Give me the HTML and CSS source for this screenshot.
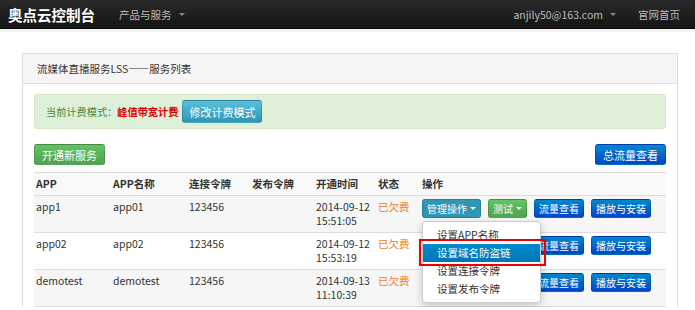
FILE: index.html
```html
<!DOCTYPE html>
<html lang="zh-CN">

<head>
    <meta charset="UTF-8">
    <title>奥点云控制台</title>
    <link rel="stylesheet" href="styles.css">
</head>

<body>
    <div class="navbar">
        <div class="brand">奥点云控制台</div>
        <div class="nav-item">产品与服务 <span class="caret"></span></div>
        <div class="nav-right">
            <div class="nav-item">anjily50@163.com <span class="caret"></span></div>
            <div class="nav-item">官网首页</div>
        </div>
    </div>

    <div class="panel">
        <div class="panel-heading">流媒体直播服务LSS——服务列表</div>
        <div class="panel-body">
            <div class="alert">
                <span>当前计费模式：</span><b class="mode">峰值带宽计费</b>
                <span class="btn btn-info btn-big">修改计费模式</span>
            </div>

            <div class="toolbar">
                <span class="btn btn-success">开通新服务</span>
                <span class="btn btn-primary">总流量查看</span>
            </div>

            <table class="list">
                <colgroup>
                    <col style="width:77px">
                    <col style="width:76px">
                    <col style="width:63px">
                    <col style="width:64px">
                    <col style="width:62px">
                    <col style="width:44px">
                    <col>
                </colgroup>
                <thead>
                    <tr>
                        <th>APP</th><th>APP名称</th><th>连接令牌</th><th>发布令牌</th><th>开通时间</th><th>状态</th><th>操作</th>
                    </tr>
                </thead>
                <tbody>
                    <tr>
                        <td>app1</td><td>app01</td><td>123456</td><td></td>
                        <td>2014-09-12<br>15:51:05</td>
                        <td class="owe">已欠费</td>
                        <td class="ops">
                            <div class="btn-row">
                                <span class="btn btn-info active">管理操作<span class="caret"></span></span>
                                <span class="btn btn-success">测试<span class="caret"></span></span>
                                <span class="btn btn-primary">流量查看</span>
                                <span class="btn btn-primary">播放与安装</span>
                            </div>
                            <ul class="dropdown">
                                <li>设置APP名称</li>
                                <li class="selected">设置域名防盗链</li>
                                <li>设置连接令牌</li>
                                <li>设置发布令牌</li>
                            </ul>
                        </td>
                    </tr>
                    <tr>
                        <td>app02</td><td>app02</td><td>123456</td><td></td>
                        <td>2014-09-12<br>15:53:19</td>
                        <td class="owe">已欠费</td>
                        <td class="ops">
                            <div class="btn-row">
                                <span class="btn btn-info">管理操作<span class="caret"></span></span>
                                <span class="btn btn-success">测试<span class="caret"></span></span>
                                <span class="btn btn-primary">流量查看</span>
                                <span class="btn btn-primary">播放与安装</span>
                            </div>
                        </td>
                    </tr>
                    <tr>
                        <td>demotest</td><td>demotest</td><td>123456</td><td></td>
                        <td>2014-09-13<br>11:10:39</td>
                        <td class="owe">已欠费</td>
                        <td class="ops">
                            <div class="btn-row">
                                <span class="btn btn-info">管理操作<span class="caret"></span></span>
                                <span class="btn btn-success">测试<span class="caret"></span></span>
                                <span class="btn btn-primary">流量查看</span>
                                <span class="btn btn-primary">播放与安装</span>
                            </div>
                        </td>
                    </tr>
                </tbody>
            </table>
        </div>
    </div>
</body>

</html>
```

FILE: styles.css
```css
body {
    margin: 0;
    font-family: "Noto Sans CJK SC", "Noto Sans", sans-serif;
    font-size: 10.5px;
    color: #333;
    background: #fff;
}

.navbar {
    height: 28px;
    display: flex;
    align-items: center;
    padding: 0 15px 0 8px;
    background: linear-gradient(#2a2a2a, #141414);
    border-bottom: 1px solid #0a0a0a;
    box-shadow: 0 3px 0 #f3f3f3;
}

.brand {
    font-size: 14.5px;
    font-weight: bold;
    color: #fff;
    margin-right: 24px;
}

.nav-item {
    color: #bbb;
    display: flex;
    align-items: center;
    gap: 4px;
}

.nav-item .caret {
    color: #888;
}

.nav-right {
    margin-left: auto;
    display: flex;
    gap: 22px;
}

.caret {
    display: inline-block;
    width: 0;
    height: 0;
    border-left: 3px solid transparent;
    border-right: 3px solid transparent;
    border-top: 3px solid currentColor;
    margin-left: 3px;
    vertical-align: middle;
}

.panel {
    margin: 24px 0 0 22px;
    width: 654px;
    border: 1px solid #ddd;
    border-bottom: none;
}

.panel-heading {
    height: 29px;
    line-height: 29px;
    padding-left: 14px;
    font-size: 10.5px;
    background: #f5f5f5;
    border-bottom: 1px solid #ddd;
}

.panel-body {
    padding: 10px 11px 0;
}

.alert {
    height: 35px;
    display: flex;
    align-items: center;
    padding-left: 11px;
    font-size: 10.2px;
    background: #dff0d8;
    border: 1px solid #d6e9c6;
    border-radius: 3px;
    color: #468847;
    box-sizing: border-box;
}

.alert .mode {
    color: #d00;
    margin-right: 4px;
}

.btn {
    display: inline-flex;
    align-items: center;
    height: 19px;
    padding: 0 4px;
    font-size: 10px;
    color: #fff;
    border-radius: 3px;
    box-sizing: border-box;
    border: 1px solid rgba(0, 0, 0, 0.15);
}

.btn-big {
    height: 23px;
    padding: 0 6px;
    font-size: 11px;
}

.btn-info {
    background: linear-gradient(#5bc0de, #2f96b4);
}

.btn-info.active {
    background: #2f96b4;
}

.btn-success {
    background: linear-gradient(#62c462, #51a351);
}

.btn-primary {
    background: linear-gradient(#0088cc, #0044cc);
}

.toolbar {
    display: flex;
    justify-content: space-between;
    margin-top: 15px;
}

.toolbar .btn {
    height: 21px;
    padding: 0 7px;
    font-size: 11px;
}

.list {
    width: 100%;
    margin-top: 7px;
    border-collapse: collapse;
    table-layout: fixed;
}

.list th,
.list td {
    text-align: left;
    vertical-align: top;
    padding: 4px 2px;
    border-top: 1px solid #ddd;
    line-height: 14px;
}

.list th {
    height: 14px;
    background: #f9f9f9;
}

.list td {
    height: 28px;
}

.list tbody tr:nth-child(odd) {
    background: #f6f6f6;
}

.list tbody tr:last-child td {
    border-bottom: 1px solid #ddd;
}

.owe {
    color: #f47a20;
}

.list td.ops {
    position: relative;
    padding-top: 3px;
}

.btn-row {
    display: flex;
    gap: 7px;
}

.dropdown {
    position: absolute;
    left: 2px;
    top: 25px;
    width: 117px;
    margin: 0;
    padding: 4px 0;
    list-style: none;
    background: #fff;
    border: 1px solid #ccc;
    border-radius: 4px;
    box-shadow: 0 3px 8px rgba(0, 0, 0, 0.2);
    z-index: 2;
}

.dropdown li {
    height: 18px;
    line-height: 18px;
    padding-left: 14px;
    color: #333;
}

.dropdown li.selected {
    position: relative;
    color: #fff;
    background: linear-gradient(#0088cc, #0077b3);
}

.dropdown li.selected::after {
    content: "";
    position: absolute;
    left: -4px;
    right: -6px;
    top: -5px;
    bottom: -4px;
    border: 2px solid #e00;
}
```
